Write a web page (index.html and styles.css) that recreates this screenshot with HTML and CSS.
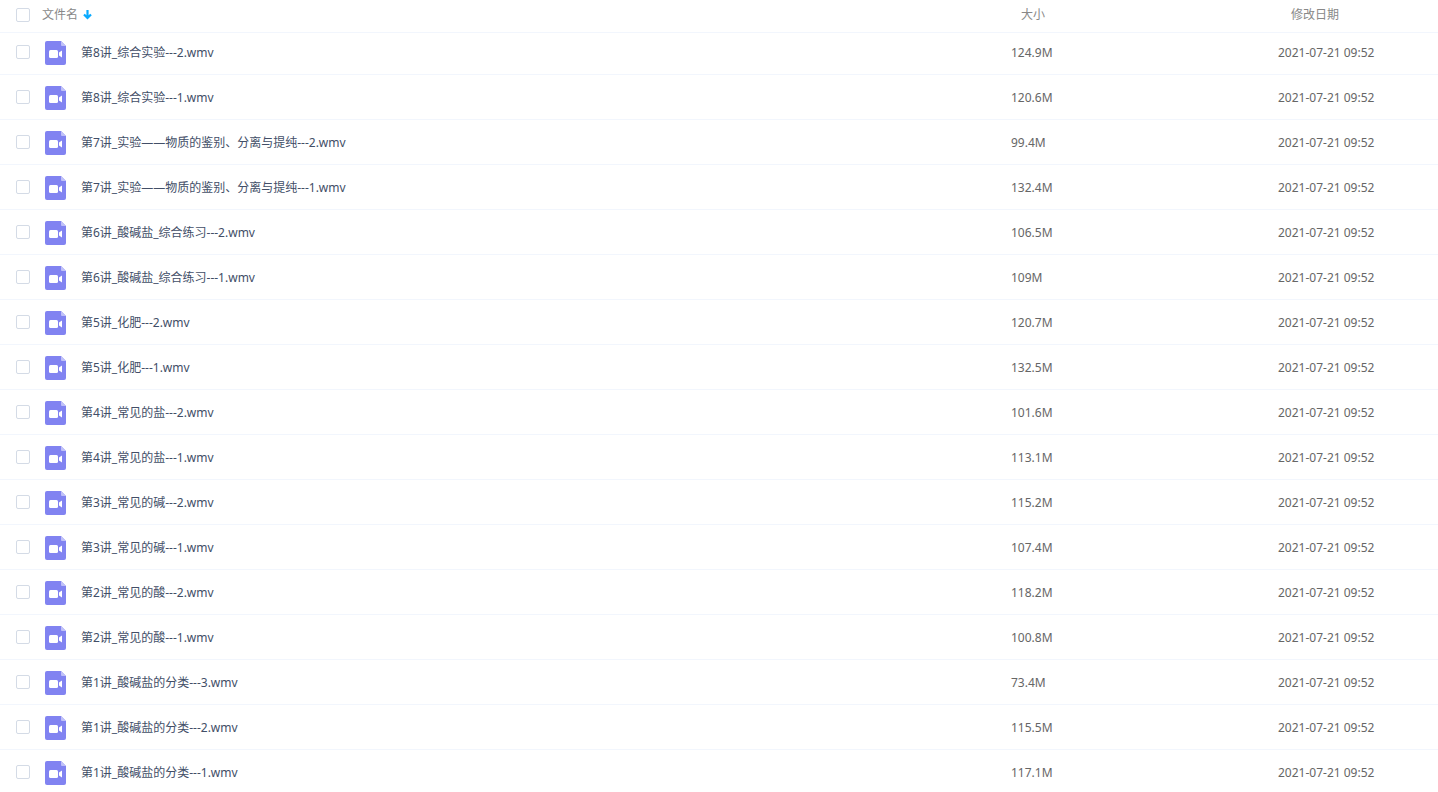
FILE: index.html
```
<!DOCTYPE html>
<html lang="zh-CN">
<head>
  <meta charset="UTF-8">
  <title>文件列表</title>
  <link rel="stylesheet" href="styles.css">
</head>
<body>
  <svg class="sprite" aria-hidden="true">
    <symbol id="icon-video" viewBox="0 0 21 24">
      <path fill="#8183f1" d="M2 0h14l5 5v17a2 2 0 0 1-2 2H2a2 2 0 0 1-2-2V2a2 2 0 0 1 2-2z"/>
      <path fill="#c0c1f8" d="M16 0l5 5h-4a1 1 0 0 1-1-1z"/>
      <rect fill="#fff" x="4" y="9" width="9" height="8" rx="1.5"/>
      <path fill="#fff" d="M17 9.400v7.200l-3-2.200v-2.800z"/>
    </symbol>
  </svg>

  <table class="file-table">
    <thead>
      <tr>
        <th class="col-check"><input type="checkbox" id="checkAll" aria-label="全选"></th>
        <th class="col-name">
          <button class="sort-button" type="button">文件名
            <svg class="sort-arrow" viewBox="0 0 9 10"><path d="M4.500 0v8M1 4.500l3.500 3.500L8 4.500" fill="none" stroke="#09aaff" stroke-width="2.200"/></svg>
          </button>
        </th>
        <th class="col-size">大小</th>
        <th class="col-date">修改日期</th>
      </tr>
    </thead>
    <tbody id="fileBody"></tbody>
  </table>

  <script>
    const files = [
      ["第8讲_综合实验---2.wmv", "124.9M"],
      ["第8讲_综合实验---1.wmv", "120.6M"],
      ["第7讲_实验——物质的鉴别、分离与提纯---2.wmv", "99.4M"],
      ["第7讲_实验——物质的鉴别、分离与提纯---1.wmv", "132.4M"],
      ["第6讲_酸碱盐_综合练习---2.wmv", "106.5M"],
      ["第6讲_酸碱盐_综合练习---1.wmv", "109M"],
      ["第5讲_化肥---2.wmv", "120.7M"],
      ["第5讲_化肥---1.wmv", "132.5M"],
      ["第4讲_常见的盐---2.wmv", "101.6M"],
      ["第4讲_常见的盐---1.wmv", "113.1M"],
      ["第3讲_常见的碱---2.wmv", "115.2M"],
      ["第3讲_常见的碱---1.wmv", "107.4M"],
      ["第2讲_常见的酸---2.wmv", "118.2M"],
      ["第2讲_常见的酸---1.wmv", "100.8M"],
      ["第1讲_酸碱盐的分类---3.wmv", "73.4M"],
      ["第1讲_酸碱盐的分类---2.wmv", "115.5M"],
      ["第1讲_酸碱盐的分类---1.wmv", "117.1M"]
    ];

    document.getElementById("fileBody").innerHTML = files.map(([name, size], index) => `<tr>
      <td class="col-check"><input type="checkbox" id="file${index}"></td>
      <td class="col-name">
        <label class="file-name" for="file${index}">
          <svg class="file-icon"><use href="#icon-video"/></svg>
          <span>${name}</span>
        </label>
      </td>
      <td class="col-size">${size}</td>
      <td class="col-date">2021-07-21 09:52</td>
    </tr>`).join("");

    document.getElementById("checkAll").addEventListener("change", e => {
      document.querySelectorAll("#fileBody input").forEach(box => box.checked = e.target.checked);
    });
  </script>
</body>
</html>
```

FILE: styles.css
```
body {
  margin: 0;
  background-color: #fff;
  font-family: "Noto Sans", "Noto Sans CJK SC", sans-serif;
  font-size: 12px;
  color: #666;
}
.sprite {
  display: none;
}
.file-table {
  width: 100%;
  table-layout: fixed;
  border-collapse: separate;
  border-spacing: 0;
}
th, td {
  box-sizing: border-box;
  padding: 0;
  border-bottom: 1px solid #f2f6fd;
  line-height: 24px;
  text-align: left;
  vertical-align: bottom;
}
th {
  height: 33px;
  padding-bottom: 5px;
  font-weight: normal;
  color: #888;
}
td {
  height: 45px;
  padding-bottom: 9px;
}
/* the first row sits closer to the header */
tbody tr:first-child td {
  height: 42px;
}
.col-check {
  width: 42px;
  padding-left: 16px;
}
.col-size {
  width: 267px;
}
.col-date {
  width: 160px;
}
th.col-size {
  padding-left: 10px;
}
th.col-date {
  padding-left: 13px;
}
input {
  appearance: none;
  display: block;
  box-sizing: border-box;
  width: 14px;
  height: 14px;
  margin: 0 0 6px;
  border: 1px solid #d4dbe6;
  border-radius: 2px;
  background-color: #fff;
}
th input {
  margin-bottom: 5px;
}
input:checked {
  background-color: #09aaff;
  border-color: #09aaff;
}
.sort-button {
  display: flex;
  align-items: center;
  gap: 5px;
  padding: 0;
  border: none;
  background: none;
  font: inherit;
  line-height: 24px;
  color: inherit;
  cursor: pointer;
}
.sort-arrow {
  width: 9px;
  height: 10px;
}
.file-name {
  display: flex;
  align-items: center;
  gap: 15px;
  padding-left: 3px;
  color: #424e67;
}
.file-icon {
  flex: none;
  width: 21px;
  height: 24px;
}
```
